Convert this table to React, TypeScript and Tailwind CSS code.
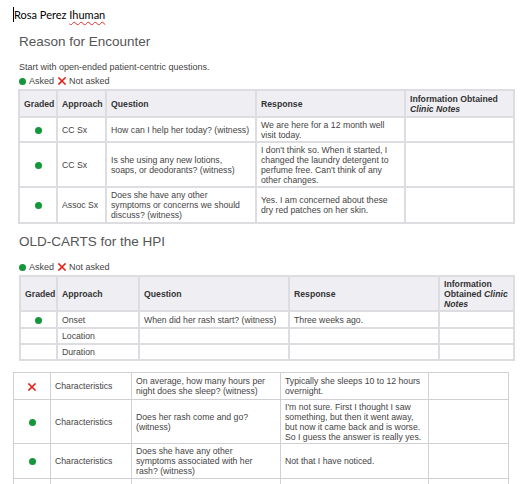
import React from 'react';

type Mark = 'asked' | 'not' | null;

interface Row {
  graded: Mark;
  approach: string;
  question: string;
  response: string;
  h: string;
}

// line breaks follow the reference layout
const encounterRows: Row[] = [
  {
    graded: 'asked',
    approach: 'CC Sx',
    question: 'How can I help her today? (witness)',
    response: 'We are here for a 12 month well\nvisit today.',
    h: 'h-[25px]',
  },
  {
    graded: 'asked',
    approach: 'CC Sx',
    question: 'Is she using any new lotions,\nsoaps, or deodorants? (witness)',
    response:
      "I don't think so. When it started, I\nchanged the laundry detergent to\nperfume free. Can't think of any\nother changes.",
    h: 'h-[45px]',
  },
  {
    graded: 'asked',
    approach: 'Assoc Sx',
    question: 'Does she have any other\nsymptoms or concerns we should\ndiscuss? (witness)',
    response: 'Yes. I am concerned about these\ndry red patches on her skin.',
    h: 'h-[36px]',
  },
];

const hpiRows: Row[] = [
  {
    graded: 'asked',
    approach: 'Onset',
    question: 'When did her rash start? (witness)',
    response: 'Three weeks ago.',
    h: 'h-[17px]',
  },
  { graded: null, approach: 'Location', question: '', response: '', h: 'h-[16px]' },
  { graded: null, approach: 'Duration', question: '', response: '', h: 'h-[16px]' },
];

const charRows: Row[] = [
  {
    graded: 'not',
    approach: 'Characteristics',
    question: 'On average, how many hours per\nnight does she sleep? (witness)',
    response: 'Typically she sleeps 10 to 12 hours\novernight.',
    h: 'h-[27px]',
  },
  {
    graded: 'asked',
    approach: 'Characteristics',
    question: 'Does her rash come and go?\n(witness)',
    response:
      "I'm not sure. First I thought I saw\nsomething, but then it went away,\nbut now it came back and is worse.\nSo I guess the answer is really yes.",
    h: 'h-[44px]',
  },
  {
    graded: 'asked',
    approach: 'Characteristics',
    question: 'Does she have any other\nsymptoms associated with her\nrash? (witness)',
    response: 'Not that I have noticed.',
    h: 'h-[35px]',
  },
  {
    graded: null,
    approach: '',
    question: 'Is there any pattern to when her\nrash appears? (witness)',
    response: '',
    h: 'h-[35px]',
  },
];

function Dot() {
  return <span className="inline-block w-[7px] h-[7px] rounded-full bg-[#14963a] align-middle" />;
}

function Cross() {
  return (
    <svg width="8" height="8" viewBox="0 0 8 8" className="inline-block align-middle">
      <path d="M1 1 L7 7 M7 1 L1 7" stroke="#e2231a" strokeWidth="1.6" strokeLinecap="square" />
    </svg>
  );
}

function Legend({ className }: { className: string }) {
  return (
    <div className={`flex items-center text-[9px] leading-[10px] text-[#444] ${className}`}>
      <Dot />
      <span className="ml-[3px]">Asked</span>
      <span className="ml-[4px] mr-[3px] flex items-center">
        <Cross />
      </span>
      <span>Not asked</span>
    </div>
  );
}

function Cells({ row, border }: { row: Row; border: string }) {
  const td = `${border} px-[4px] align-middle whitespace-pre-line`;
  return (
    <tr className={row.h}>
      <td className={`${td} text-center`}>
        {row.graded === 'asked' && <Dot />}
        {row.graded === 'not' && <Cross />}
      </td>
      <td className={td}>{row.approach}</td>
      <td className={td}>{row.question}</td>
      <td className={td}>{row.response}</td>
      <td className={td}></td>
    </tr>
  );
}

export default function App() {
  const b1 = 'border-2 border-[#dcdce1]';
  const b3 = 'border border-[#cfcfd4]';
  const th = `${b1} bg-[#efeff3] px-[4px] text-left font-bold align-middle`;
  const tbl = 'table-fixed border-collapse text-[8.7px] leading-[10px] text-[#444]';

  return (
    <div className="w-[521px] h-[484px] overflow-hidden bg-white font-['Liberation_Sans',Arial,sans-serif] text-[#444]">
      <div className="flex items-center h-[16px] mt-[6px] ml-[13px]">
        <span className="w-px h-[15px] bg-black" />
        <span className="font-['Lato',sans-serif] text-[11px] text-black leading-[15px]">
          Rosa Perez{' '}
          <span className="underline decoration-wavy decoration-[#e03030] decoration-1 underline-offset-2">
            Ihuman
          </span>
        </span>
      </div>

      <div className="ml-[19px] mt-[11px] text-[13.5px] leading-[17px] text-[#555]">Reason for Encounter</div>
      <div className="ml-[19px] mt-[12px] text-[9px] leading-[10px] text-[#444]">
        Start with open-ended patient-centric questions.
      </div>
      <Legend className="ml-[19px] mt-[4px]" />

      <table className={`ml-[18px] mt-[3px] w-[495px] ${tbl}`}>
        <colgroup>
          <col className="w-[38px]" />
          <col className="w-[49px]" />
          <col className="w-[150px]" />
          <col className="w-[149px]" />
          <col className="w-[109px]" />
        </colgroup>
        <thead>
          <tr className="h-[27px] text-[#333]">
            <th className={`${th} text-center px-0`}>Graded</th>
            <th className={`${th} px-[3px]`}>Approach</th>
            <th className={th}>Question</th>
            <th className={th}>Response</th>
            <th className={th}>
              Information Obtained
              <br />
              <i>Clinic Notes</i>
            </th>
          </tr>
        </thead>
        <tbody>
          {encounterRows.map((r, i) => (
            <Cells key={i} row={r} border={b1} />
          ))}
        </tbody>
      </table>

      <div className="ml-[19px] mt-[9px] text-[13.5px] leading-[17px] text-[#555]">OLD-CARTS for the HPI</div>
      <Legend className="ml-[19px] mt-[12px]" />

      <table className={`ml-[19px] mt-[3px] w-[494px] ${tbl}`}>
        <colgroup>
          <col className="w-[37px]" />
          <col className="w-[82px]" />
          <col className="w-[150px]" />
          <col className="w-[150px]" />
          <col className="w-[75px]" />
        </colgroup>
        <thead>
          <tr className="h-[35px] text-[#333]">
            <th className={`${th} text-center px-0`}>Graded</th>
            <th className={th}>Approach</th>
            <th className={th}>Question</th>
            <th className={th}>Response</th>
            <th className={th}>
              Information
              <br />
              Obtained <i>Clinic</i>
              <br />
              <i>Notes</i>
            </th>
          </tr>
        </thead>
        <tbody>
          {hpiRows.map((r, i) => (
            <Cells key={i} row={r} border={b1} />
          ))}
        </tbody>
      </table>

      <table className={`ml-[13px] mt-[11px] w-[495px] ${tbl}`}>
        <colgroup>
          <col className="w-[37px]" />
          <col className="w-[81px]" />
          <col className="w-[149px]" />
          <col className="w-[148px]" />
          <col className="w-[80px]" />
        </colgroup>
        <tbody>
          {charRows.map((r, i) => (
            <Cells key={i} row={r} border={b3} />
          ))}
        </tbody>
      </table>
    </div>
  );
}
